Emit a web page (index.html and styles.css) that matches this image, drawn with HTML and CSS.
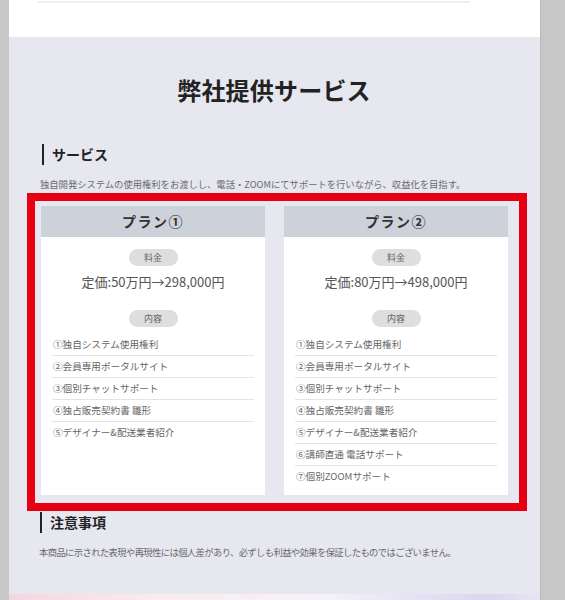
FILE: index.html
```html
<!DOCTYPE html>
<html lang="ja">
<head>
<meta charset="utf-8">
<title>弊社提供サービス</title>
<link rel="stylesheet" href="styles.css">
</head>
<body>
<div class="page">
  <div class="top">
    <div class="top-line"></div>
  </div>
  <main class="services">
    <h1 class="title">弊社提供サービス</h1>

    <h2 class="heading">サービス</h2>
    <p class="desc">独自開発システムの使用権利をお渡しし、電話・ZOOMにてサポートを行いながら、収益化を目指す。</p>

    <div class="plans">
      <section class="plan">
        <h3 class="plan-head">プラン①</h3>
        <div class="plan-body">
          <span class="pill">料金</span>
          <p class="price">定価:50万円→298,000円</p>
          <span class="pill pill-content">内容</span>
          <ul class="items">
            <li>①独自システム使用権利</li>
            <li>②会員専用ポータルサイト</li>
            <li>③個別チャットサポート</li>
            <li>④独占販売契約書 雛形</li>
            <li>⑤デザイナー&amp;配送業者紹介</li>
          </ul>
        </div>
      </section>
      <section class="plan">
        <h3 class="plan-head">プラン②</h3>
        <div class="plan-body">
          <span class="pill">料金</span>
          <p class="price">定価:80万円→498,000円</p>
          <span class="pill pill-content">内容</span>
          <ul class="items">
            <li>①独自システム使用権利</li>
            <li>②会員専用ポータルサイト</li>
            <li>③個別チャットサポート</li>
            <li>④独占販売契約書 雛形</li>
            <li>⑤デザイナー&amp;配送業者紹介</li>
            <li>⑥講師直通 電話サポート</li>
            <li>⑦個別ZOOMサポート</li>
          </ul>
        </div>
      </section>
    </div>

    <h2 class="heading heading-notes">注意事項</h2>
    <p class="desc desc-notes">本商品に示された表現や再現性には個人差があり、必ずしも利益や効果を保証したものではございません。</p>
  </main>
  <div class="next-band"></div>
</div>
</body>
</html>
```

FILE: styles.css
```css
* { box-sizing: border-box; }

html, body {
  margin: 0;
  padding: 0;
}

body {
  background: #c7c7c7;
  font-family: "Noto Sans CJK JP", "Noto Sans", sans-serif;
  color: #333;
  overflow: hidden;
}

.page {
  margin-left: 9px;
  width: 531px;
  min-height: 600px;
  background: #e6e7ef;
  box-shadow: 1px 0 1px rgba(0,0,0,0.06);
}

.top {
  height: 38px;
  background: #fff;
  padding-top: 1px;
  border-bottom: 1px solid #e9eaee;
}

.top-line {
  margin-left: 29px;
  width: 432px;
  height: 2px;
  background: #efefef;
}

.services {
  padding: 0 32px 0 31px;
}

.title {
  margin: 34px 0 0;
  font-size: 24px;
  line-height: 36px;
  font-weight: 700;
  color: #222;
  text-align: center;
  letter-spacing: 0.2px;
}

.heading {
  margin: 36px 0 0 2px;
  border-left: 2px solid #222;
  padding-left: 8px;
  font-size: 14px;
  line-height: 21px;
  font-weight: 700;
  color: #222;
}

.heading-notes {
  margin: 17px 0 0 0;
}

.desc {
  margin: 11px 0 0;
  font-size: 9.3px;
  line-height: 16px;
  color: #6a6a6a;
  white-space: nowrap;
}

.desc-notes {
  letter-spacing: -0.6px;
  margin-left: -1px;
}

.plans {
  position: relative;
  margin: 14px 0 0 1px;
  display: grid;
  grid-template-columns: 224px 224px;
  column-gap: 19px;
}

.plans::after {
  content: "";
  position: absolute;
  top: -13px;
  left: -14px;
  right: -19px;
  bottom: -16px;
  border: 8px solid #e60012;
  pointer-events: none;
}

.plan {
  background: #fff;
}

.plan-head {
  margin: 0;
  height: 31px;
  background: #cdd1da;
  font-size: 14px;
  line-height: 31px;
  font-weight: 700;
  color: #333;
  text-align: center;
  letter-spacing: 1.5px;
}

.plan-body {
  padding: 12px 11px 7px;
  display: flex;
  flex-direction: column;
  align-items: center;
}

.pill {
  display: block;
  width: 49px;
  height: 17px;
  border-radius: 9px;
  background: #dedede;
  font-size: 9px;
  line-height: 17px;
  color: #666;
  text-align: center;
}

.price {
  margin: 6px 0 0;
  font-size: 13px;
  line-height: 20px;
  color: #555;
}

.pill-content {
  margin-top: 18px;
}

.items {
  list-style: none;
  margin: 7px 0 0;
  padding: 0;
  width: 100%;
}

.items li {
  height: 22px;
  line-height: 21px;
  border-bottom: 1px solid #e4e4e4;
  font-size: 9.6px;
  color: #666;
  padding-left: 1px;
}

.items li:last-child {
  border-bottom: none;
}

.next-band {
  margin-top: 34px;
  height: 40px;
  background: linear-gradient(90deg, #f6d6de 0%, #fbecf0 30%, #f4f1f8 60%, #dcd5f1 90%, #e8e4f5 100%);
}
```
